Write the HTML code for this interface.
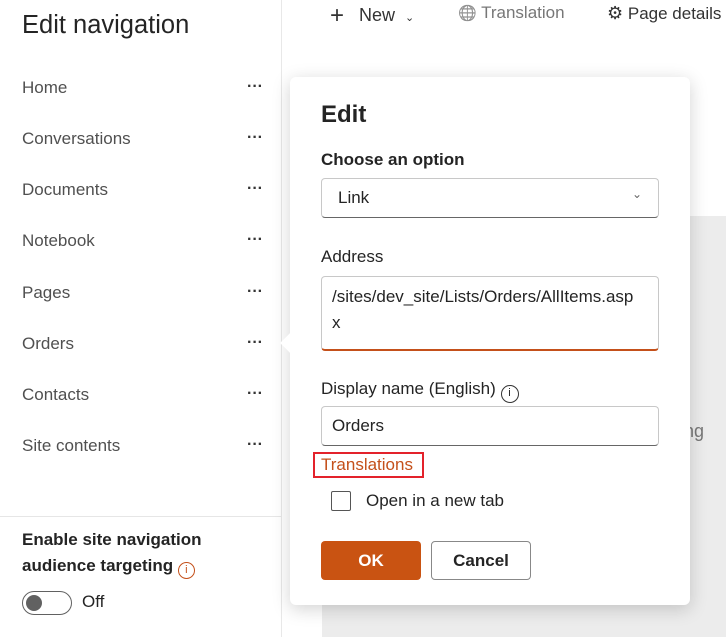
<!DOCTYPE html>
<html><head><style>
*{box-sizing:border-box;margin:0;padding:0}
body{width:726px;height:637px;position:relative;overflow:hidden;background:#fff;font-family:"Segoe UI","Liberation Sans",sans-serif;color:#323130}
.abs{position:absolute}
.left{left:0;top:0;width:282px;height:637px;border-right:1px solid #e8e8e8;background:#fff}
.nav{position:absolute;left:22px;font-size:17px;color:#505050}
.dots{position:absolute;left:247px;font-size:16px;color:#333;font-weight:700}
.gray{left:322px;top:216px;width:404px;height:421px;background:#ececec}
.dlg{left:290px;top:77px;width:400px;height:528px;background:#fff;border-radius:6px;box-shadow:0 4px 18px rgba(0,0,0,.18)}
.in{position:absolute;left:31px;width:338px;border:1px solid #c8c8c8;border-radius:4px;font-size:17px;color:#242424}
</style></head><body>
<div class="abs gray"></div>
<div class="abs left">
<div class="abs" style="left:22px;top:11px;font-size:25.5px;color:#242424">Edit navigation</div>
<div class="nav" style="top:78px">Home</div>
<div class="nav" style="top:129px">Conversations</div>
<div class="nav" style="top:180px">Documents</div>
<div class="nav" style="top:231px">Notebook</div>
<div class="nav" style="top:283px">Pages</div>
<div class="nav" style="top:334px">Orders</div>
<div class="nav" style="top:385px">Contacts</div>
<div class="nav" style="top:436px">Site contents</div>
<div class="dots" style="top:78px">···</div>
<div class="dots" style="top:129px">···</div>
<div class="dots" style="top:180px">···</div>
<div class="dots" style="top:231px">···</div>
<div class="dots" style="top:283px">···</div>
<div class="dots" style="top:334px">···</div>
<div class="dots" style="top:385px">···</div>
<div class="dots" style="top:436px">···</div>
<div class="abs" style="left:0;top:516px;width:281px;border-top:1px solid #e6e6e6"></div>
<div class="abs" style="left:22px;top:527px;font-size:17px;font-weight:600;color:#242424;line-height:26px">Enable site navigation<br>audience targeting <span style="display:inline-block;width:17px;height:17px;border:1.5px solid #c4501a;border-radius:50%;color:#c4501a;font-size:11px;text-align:center;line-height:14px;font-weight:400;vertical-align:-2px">i</span></div>
<div class="abs" style="left:22px;top:591px;width:50px;height:24px;border:1px solid #616161;border-radius:12px"><div class="abs" style="left:3px;top:3px;width:16px;height:16px;border-radius:50%;background:#616161"></div></div>
<div class="abs" style="left:82px;top:592px;font-size:17px;color:#242424">Off</div>
</div>
<div class="abs" style="left:330px;top:2px;font-size:18px;color:#333"><span style="font-size:24px;font-weight:300;vertical-align:-2px">+</span>&nbsp;&nbsp; New &nbsp;<span style="font-size:11px">&#8964;</span></div>
<div class="abs" style="left:458px;top:3px;font-size:17px;color:#777"><span style="font-size:15px;filter:grayscale(1)">🌐</span> Translation</div>
<div class="abs" style="left:607px;top:3px;font-size:17px;color:#333"><span style="font-size:18px">⚙</span> Page details</div>
<div class="abs" style="left:684px;top:421px;font-size:18px;color:#777">ng</div>
<div class="abs dlg">
<div class="abs" style="left:-7px;top:259px;width:14px;height:14px;background:#fff;transform:rotate(45deg)"></div>
<div class="abs" style="left:31px;top:24px;font-size:24px;font-weight:600;color:#242424">Edit</div>
<div class="abs" style="left:31px;top:73px;font-size:17px;font-weight:600;color:#242424">Choose an option</div>
<div class="in" style="top:101px;height:40px;padding:9px 16px;border-bottom-color:#666">Link<span style="position:absolute;right:16px;top:8px;font-size:12px;color:#666">&#8964;</span></div>
<div class="abs" style="left:31px;top:170px;font-size:17px;color:#242424">Address</div>
<div class="in" style="top:199px;height:75px;padding:7px 10px;line-height:26px;border-bottom:2px solid #c4501a">/sites/dev_site/Lists/Orders/AllItems.asp<br>x</div>
<div class="abs" style="left:31px;top:302px;font-size:17px;color:#242424">Display name (English) <span style="display:inline-block;width:18px;height:18px;border:1.5px solid #333;border-radius:50%;font-size:11px;text-align:center;line-height:15px;vertical-align:-2px">i</span></div>
<div class="in" style="top:329px;height:40px;padding:9px 10px;border-bottom-color:#666">Orders</div>
<div class="abs" style="left:23px;top:375px;width:111px;height:26px;border:2px solid #e3222b"></div>
<div class="abs" style="left:31px;top:378px;font-size:17px;color:#c4501a">Translations</div>
<div class="abs" style="left:41px;top:414px;width:20px;height:20px;border:1px solid #555;border-radius:2px"></div>
<div class="abs" style="left:76px;top:414px;font-size:17px;color:#242424">Open in a new tab</div>
<div class="abs" style="left:31px;top:464px;width:100px;height:39px;background:#c95312;border-radius:4px;color:#fff;font-weight:700;font-size:17px;text-align:center;line-height:39px">OK</div>
<div class="abs" style="left:141px;top:464px;width:100px;height:39px;border:1px solid #888;border-radius:4px;font-weight:600;font-size:17px;text-align:center;line-height:37px;color:#242424">Cancel</div>
</div>
</body></html>
